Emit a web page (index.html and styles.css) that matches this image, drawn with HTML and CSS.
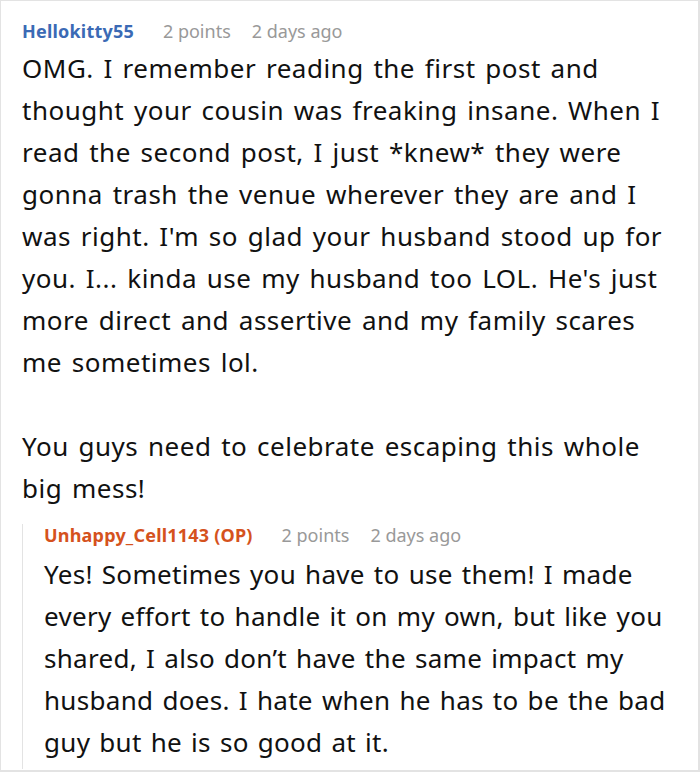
FILE: index.html
```html
<!DOCTYPE html>
<html>
<head>
<meta charset="utf-8">
<link rel="stylesheet" href="styles.css">
</head>
<body>
<div class="card">
  <div class="comment">
    <div class="meta">
      <span class="user user-blue">Hellokitty55</span>
      <span class="info">2 points</span>
      <span class="info">2 days ago</span>
    </div>
    <div class="text">
      <p>OMG. I remember reading the first post and<br>thought your cousin was freaking insane. When I<br>read the second post, I just *knew* they were<br>gonna trash the venue wherever they are and I<br>was right. I'm so glad your husband stood up for<br>you. I... kinda use my husband too LOL. He's just<br>more direct and assertive and my family scares<br>me sometimes lol.</p>
      <p class="gap">You guys need to celebrate escaping this whole<br>big mess!</p>
    </div>
    <div class="reply">
      <div class="meta">
        <span class="user user-orange">Unhappy_Cell1143 (OP)</span>
        <span class="info">2 points</span>
        <span class="info">2 days ago</span>
      </div>
      <div class="text">
        <p>Yes! Sometimes you have to use them! I made<br>every effort to handle it on my own, but like you<br>shared, I also don’t have the same impact my<br>husband does. I hate when he has to be the bad<br>guy but he is so good at it.</p>
      </div>
    </div>
  </div>
</div>
</body>
</html>
```

FILE: styles.css
```css
html, body {
  margin: 0;
  padding: 0;
  background: #fff;
}
.card {
  box-sizing: border-box;
  width: 700px;
  height: 772px;
  border: 1px solid #e3e3e3;
  border-right-width: 2px;
  border-bottom-width: 2px;
  font-family: "Noto Sans", sans-serif;
  color: #111;
  overflow: hidden;
}
.comment {
  padding: 19px 0 0 21px;
}
.meta {
  display: flex;
  gap: 21px;
  font-size: 18px;
  line-height: 22px;
  height: 22px;
  white-space: nowrap;
}
.user {
  font-weight: bold;
  letter-spacing: 0.2px;
  margin-right: 8px;
}
.user-blue { color: #3b6ab5; }
.user-orange { color: #d5521d; }
.info { color: #999; }
.text {
  font-size: 26px;
  line-height: 42px;
  letter-spacing: 0.5px;
  word-spacing: 2.5px;
  margin-top: 5px;
  white-space: nowrap;
}
.text p { margin: 0; }
.text p.gap { margin-top: 42px; }
.reply {
  margin-top: 15px;
  border-left: 1px solid #e3e3e3;
  padding-left: 21px;
  padding-bottom: 6px;
}
.reply .text {
  margin-top: 7px;
  letter-spacing: 0.3px;
  word-spacing: 2px;
}
```
